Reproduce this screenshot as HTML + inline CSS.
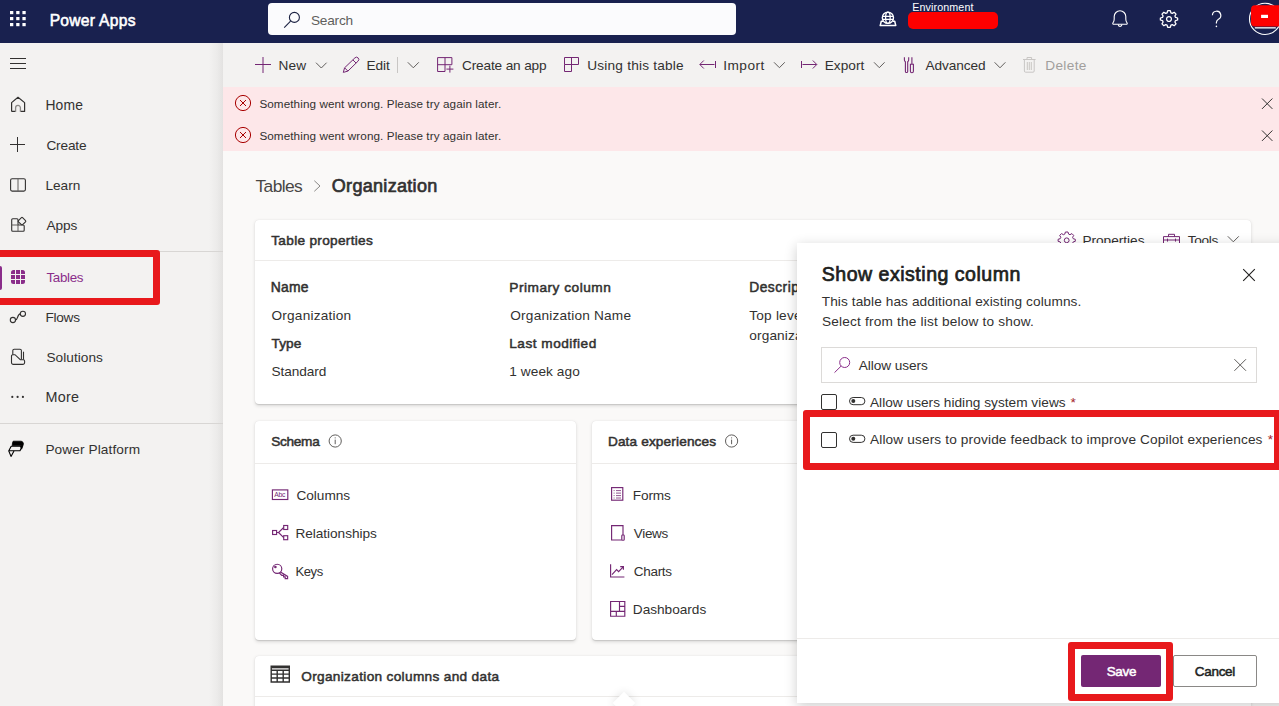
<!DOCTYPE html>
<html lang="en"><head><meta charset="utf-8"><title>Power Apps</title>
<style>
*{box-sizing:border-box;margin:0;padding:0}
html,body{width:1279px;height:706px;overflow:hidden;background:#faf9f8;font-family:"Liberation Sans",sans-serif;color:#323130;font-size:14px}
body{position:relative}
.a{position:absolute}
.t{position:absolute;white-space:nowrap;line-height:1}
svg.l{position:absolute;left:0;top:0;width:1279px;height:706px;overflow:visible}
.card{position:absolute;background:#fff;border-radius:4px;box-shadow:0 1.6px 3.6px rgba(0,0,0,.13),0 .3px .9px rgba(0,0,0,.11)}
.hr{position:absolute;height:1px;background:#edebe9}
.red{position:absolute;border:7px solid #e8191c;border-radius:3px}
</style></head><body>

<!-- MAIN -->
<div class="a" id="main" style="left:223px;top:43px;width:1056px;height:663px;background:#faf9f8;box-shadow:0 0 14px rgba(0,0,0,.13)"></div>
<div class="a" style="left:223px;top:43px;width:1056px;height:44px;background:#f3f2f1"></div>
<div class="a" style="left:223px;top:87px;width:1056px;height:64px;background:#fde7e9"></div>
<div class="card" style="left:255px;top:220px;width:996px;height:184px"><div class="hr" style="left:0;top:40px;width:996px"></div></div>
<div class="card" style="left:255px;top:421px;width:321px;height:218.5px"><div class="hr" style="left:0;top:41.5px;width:321px"></div></div>
<div class="card" style="left:592px;top:421px;width:321px;height:218.5px"><div class="hr" style="left:0;top:41.5px;width:321px"></div></div>
<div class="card" style="left:255px;top:656px;width:996px;height:80px"><div class="hr" style="left:0;top:40px;width:996px"></div></div>
<div class="a" style="left:616px;top:694.8px;width:16px;height:16px;background:#fff;transform:rotate(45deg);box-shadow:0 0 10px rgba(0,0,0,.13)"></div>
<svg class="l" viewBox="0 0 1279 706" fill="none" stroke="#742774" stroke-width="1">
<!-- New plus -->
<path d="M255 64.5H271M263 57V73"/>
<!-- chevrons -->
<g stroke="#605e5c" stroke-width="1">
<path d="M316 62.7L321.3 68L326.6 62.7"/>
<path d="M407.8 62.3L413.3 67.8L418.8 62.3"/>
<path d="M774 62.3L779.4 67.7L784.8 62.3"/>
<path d="M874 62.3L879.3 67.7L884.6 62.3"/>
<path d="M994.6 62.3L1000 67.8L1005.4 62.3"/>
<path d="M1227.8 236.3L1233.3 241.8L1238.8 236.3"/>
<path d="M314.3 180.7L320 186L314.3 191.3" stroke="#8a8886"/>
</g>
<path d="M397.5 57V73" stroke="#c8c6c4"/>
<!-- pencil -->
<path d="M343.3 72.4L344.6 67.8L354.9 57.9A2.2 2.2 0 0 1 358.1 61.1L347.9 71.1Z" stroke-linejoin="round"/>
<path d="M344.6 67.8L347.9 71.1M352.9 59.9L356.1 63.1"/>
<!-- create app -->
<path d="M445 71.5H437.6V57.6H451.9V64.7M445 57.6V71.5M437.6 64.7H451.9M446.4 69.1H453.4M449.9 65.6V72.6"/>
<!-- using table -->
<path d="M564.5 57.5H578.5V64.5H564.5ZM564.5 64.5V71.5H571.5V57.5"/>
<!-- import -->
<path d="M715.5 61V68M714.5 64.5H700M703.8 60.5L699.8 64.5L703.8 68.5"/>
<!-- export -->
<path d="M801.5 61V68M802.5 64.5H816.6M812.8 60.5L816.8 64.5L812.8 68.5"/>
<!-- advanced -->
<path d="M904.4 57.3V60A2 2 0 0 0 905.4 61.7V71.4A1.15 1.15 0 0 0 907.7 71.4V61.7A2 2 0 0 0 908.7 60V57.3M911.9 57.3V64M910.4 64.3H913.4V71.2A1.5 1.5 0 0 1 910.4 71.2Z" stroke-width="1.1"/>
<!-- trash -->
<g stroke="#c8c6c4">
<path d="M1023 59.5H1035.6M1027 59.5V57.5H1031.6V59.5M1024.4 59.5V71A1.2 1.2 0 0 0 1025.6 72.2H1033A1.2 1.2 0 0 0 1034.2 71V59.5M1027.3 62V70M1029.3 62V70M1031.3 62V70"/>
</g>
<!-- error icons -->
<g stroke="#a80000">
<circle cx="243" cy="103" r="7.6"/><path d="M240 100L246 106M246 100L240 106"/>
<circle cx="243" cy="135" r="7.6"/><path d="M240 132L246 138M246 132L240 138"/>
</g>
<g stroke="#323130">
<path d="M1262 98.5L1272.4 108.9M1272.4 98.5L1262 108.9"/>
<path d="M1262 130.5L1272.4 140.9M1272.4 130.5L1262 140.9"/>
</g>
<!-- properties gear (purple) -->
<g transform="translate(1066.7 240.3)">
<circle r="2.4"/>
<path d="M-1.3 -8.3H1.3L1.9 -6.2L3.3 -5.6L5.2 -6.7L7 -4.9L5.9 -3L6.5 -1.6L8.6 -1V1L6.5 1.6L5.9 3L7 4.9L5.2 6.7L3.3 5.6L1.9 6.2L1.3 8.3H-1.3L-1.9 6.2L-3.3 5.6L-5.2 6.7L-7 4.9L-5.9 3L-6.5 1.6L-8.6 1V-1L-6.5 -1.6L-5.9 -3L-7 -4.9L-5.2 -6.7L-3.3 -5.6L-1.9 -6.2Z" stroke-linejoin="round"/>
</g>
<!-- toolbox -->
<path d="M1163.5 236.6H1179.5V247H1163.5ZM1168.5 236.6V234.3H1174.5V236.6M1163.5 240H1179.5M1167.5 238.6V241.6M1175.5 238.6V241.6"/>
<!-- info icons -->
<g stroke="#605e5c">
<circle cx="335.2" cy="441" r="6.1"/><path d="M335.2 439.6V444.2M335.2 437.4V438.4"/>
<circle cx="731.6" cy="441" r="6.1"/><path d="M731.6 439.6V444.2M731.6 437.4V438.4"/>
</g>
<g stroke-width="1.15">
<!-- columns Abc -->
<rect x="272.4" y="489.9" width="15.4" height="9.6"/>
<text x="274.2" y="497.3" font-family="Liberation Sans, sans-serif" font-size="6.8" fill="#742774" stroke="none" letter-spacing="-.2">Abc</text>
<!-- relationships -->
<rect x="272.6" y="530.5" width="4" height="4"/><rect x="283.7" y="525.5" width="4" height="4"/><rect x="283.7" y="535.7" width="4" height="4"/>
<path d="M276.6 532.5H278.6L283.7 527.5M278.6 532.5L283.7 537.7"/>
<!-- key -->
<circle cx="277.2" cy="568.8" r="4.6"/><circle cx="275.4" cy="567" r=".7" fill="#742774"/>
<path d="M280.5 572L287.6 576.4V578.6H285.2V576.9H283.6V575.4H281.8L279.4 573"/>
<!-- forms -->
<rect x="611.6" y="487.6" width="11.2" height="12.6"/>
<path stroke-width=".8" d="M613.6 490.6h1M616 490.6H621M613.6 493.1h1M616 493.1H621M613.6 495.6h1M616 495.6H621M613.6 498h1M616 498H621"/>
<!-- views -->
<path d="M621.8 540H611.6V525.6H623V535"/><rect x="621.8" y="535" width="2.4" height="5.2" rx=".8"/>
<!-- charts -->
<path d="M610.6 564.2V577H624.4M612 574.6L616.6 569.6L618.6 571.6L623.2 566.8M620.2 566.6H623.4V569.8"/>
<!-- dashboards -->
<path d="M610.6 601.5H624.8V616.2H610.6ZM619.5 601.5V611.3M610.6 611.3H624.8M619.5 606.4H624.8M616.3 611.3V616.2"/>
</g>
<!-- table icon (dark) -->
<g stroke="#323130" stroke-width="1.4">
<path d="M271.2 666.2H289.3V682H271.2ZM271.2 670.2H289.3M271.2 674.1H289.3M271.2 678H289.3M277.2 670.2V682M283.2 670.2V682"/>
<path d="M271.2 667.2H289.3" stroke-width="2.2"/>
</g>

</svg>
<span class="t" style="left:278.50px;top:58.67px;font-size:13.65px;letter-spacing:0.156px;color:#323130">New</span>
<span class="t" style="left:366.50px;top:58.67px;font-size:13.65px;letter-spacing:-0.072px;color:#323130">Edit</span>
<span class="t" style="left:462.00px;top:58.67px;font-size:13.65px;letter-spacing:-0.156px;color:#323130">Create an app</span>
<span class="t" style="left:587.25px;top:58.67px;font-size:13.65px;letter-spacing:0.205px;color:#323130">Using this table</span>
<span class="t" style="left:723.25px;top:58.67px;font-size:13.65px;letter-spacing:0.476px;color:#323130">Import</span>
<span class="t" style="left:824.75px;top:58.67px;font-size:13.65px;letter-spacing:0.023px;color:#323130">Export</span>
<span class="t" style="left:925.50px;top:58.67px;font-size:13.65px;letter-spacing:-0.083px;color:#323130">Advanced</span>
<span class="t" style="left:1045.25px;top:58.67px;font-size:13.65px;letter-spacing:0.331px;color:#a19f9d">Delete</span>
<span class="t" style="left:259.40px;top:97.65px;font-size:11.7px;letter-spacing:0.09px;color:#323130">Something went wrong. Please try again later.</span>
<span class="t" style="left:259.40px;top:129.65px;font-size:11.7px;letter-spacing:0.09px;color:#323130">Something went wrong. Please try again later.</span>
<span class="t" style="left:255.50px;top:178.30px;font-size:17.4px;letter-spacing:-0.615px;color:#484644">Tables</span>
<span class="t" style="left:331.75px;top:176.98px;font-size:18.04px;letter-spacing:0.299px;color:#323130;-webkit-text-stroke:0.67px #323130">Organization</span>
<span class="t" style="left:271.25px;top:233.68px;font-size:13.65px;letter-spacing:0.301px;color:#323130;-webkit-text-stroke:0.51px #323130">Table properties</span>
<span class="t" style="left:1082.40px;top:233.68px;font-size:13.65px;letter-spacing:-0.005px;color:#323130">Properties</span>
<span class="t" style="left:1187.70px;top:233.68px;font-size:13.64px;letter-spacing:-0.298px;color:#323130">Tools</span>
<span class="t" style="left:270.75px;top:281.04px;font-size:13.92px;letter-spacing:0.213px;color:#323130;-webkit-text-stroke:0.52px #323130">Name</span>
<span class="t" style="left:271.50px;top:308.68px;font-size:13.65px;letter-spacing:0.204px;color:#323130">Organization</span>
<span class="t" style="left:271.50px;top:336.68px;font-size:13.65px;letter-spacing:0.088px;color:#323130;-webkit-text-stroke:0.51px #323130">Type</span>
<span class="t" style="left:271.50px;top:364.68px;font-size:13.65px;letter-spacing:-0.075px;color:#323130">Standard</span>
<span class="t" style="left:509.30px;top:280.65px;font-size:13.69px;letter-spacing:0.496px;color:#323130;-webkit-text-stroke:0.51px #323130">Primary column</span>
<span class="t" style="left:510.30px;top:308.68px;font-size:13.65px;letter-spacing:0.198px;color:#323130">Organization Name</span>
<span class="t" style="left:509.30px;top:336.68px;font-size:13.65px;letter-spacing:0.488px;color:#323130;-webkit-text-stroke:0.51px #323130">Last modified</span>
<span class="t" style="left:509.30px;top:364.68px;font-size:13.65px;letter-spacing:0.08px;color:#323130">1 week ago</span>
<span class="t" style="left:749.20px;top:280.61px;font-size:13.78px;letter-spacing:0.51px;color:#323130;-webkit-text-stroke:0.51px #323130">Description</span>
<span class="t" style="left:749.30px;top:308.68px;font-size:13.65px;letter-spacing:0.203px;color:#323130">Top level of the Microsoft Dynamics 365 business hierarchy. The</span>
<span class="t" style="left:749.30px;top:328.68px;font-size:13.65px;letter-spacing:0.124px;color:#323130">organization can be a specific business, holding company, or corporation.</span>
<span class="t" style="left:271.20px;top:434.68px;font-size:13.65px;letter-spacing:-0.291px;color:#323130;-webkit-text-stroke:0.51px #323130">Schema</span>
<span class="t" style="left:296.40px;top:488.68px;font-size:13.65px;letter-spacing:-0.017px;color:#323130">Columns</span>
<span class="t" style="left:295.40px;top:526.67px;font-size:13.65px;letter-spacing:-0.039px;color:#323130">Relationships</span>
<span class="t" style="left:295.40px;top:564.98px;font-size:13.05px;letter-spacing:-0.394px;color:#323130">Keys</span>
<span class="t" style="left:607.90px;top:434.68px;font-size:13.65px;letter-spacing:0.138px;color:#323130;-webkit-text-stroke:0.51px #323130">Data experiences</span>
<span class="t" style="left:632.80px;top:488.68px;font-size:13.65px;letter-spacing:-0.156px;color:#323130">Forms</span>
<span class="t" style="left:633.80px;top:526.75px;font-size:13.49px;letter-spacing:-0.321px;color:#323130">Views</span>
<span class="t" style="left:633.80px;top:564.74px;font-size:13.53px;letter-spacing:-0.31px;color:#323130">Charts</span>
<span class="t" style="left:632.80px;top:602.67px;font-size:13.65px;letter-spacing:-0.015px;color:#323130">Dashboards</span>
<span class="t" style="left:301.25px;top:669.67px;font-size:13.65px;letter-spacing:0.322px;color:#323130;-webkit-text-stroke:0.51px #323130">Organization columns and data</span>

<!-- SIDEBAR -->
<div class="a" id="side" style="left:0;top:43px;width:223px;height:663px;background:linear-gradient(90deg,#f3f2f1 0,#f3f2f1 209px,#ecebea 217px,#e3e2e1 223px)"></div>
<div class="a" style="left:0;top:251px;width:223px;height:1px;background:#d8d6d4"></div>
<div class="a" style="left:0;top:423px;width:223px;height:1px;background:#d8d6d4"></div>
<div class="a" style="left:0;top:266px;width:2px;height:24px;background:#8a2d8a;border-radius:0 2px 2px 0"></div>
<svg class="l" viewBox="0 0 1279 706" fill="none" stroke="#323130" stroke-width="1.1">
<!-- hamburger -->
<path d="M10 58.5H26M10 63.5H26M10 68.5H26" stroke-width="1"/>
<!-- home -->
<path d="M11.6 111.4V102.6L18 97.3L24.6 102.6V111.4H20.4M15.6 111.4H11.6" stroke-width="1.2" stroke-linejoin="round"/>
<path d="M15.6 111.8V107.8A2.4 2.4 0 0 1 20.4 107.8V111.8" stroke="#8a8886" stroke-width="1.3"/>
<!-- create plus -->
<path d="M10 144.5H25M17.5 137V152" stroke-width="1"/>
<!-- learn -->
<rect x="10.6" y="178.7" width="14.8" height="12.4" rx="1.5" stroke-width="1.1"/>
<path d="M18 179V191" stroke="#605e5c" stroke-width="1"/>
<!-- apps -->
<path d="M18 225V219.8A1 1 0 0 0 17 218.8H12.7A1 1 0 0 0 11.7 219.8V230.2A1 1 0 0 0 12.7 231.2H23.2A1 1 0 0 0 24.2 230.2V226A1 1 0 0 0 23.2 225Z" stroke-width="1.1"/>
<path d="M11.7 225H18V231.2" stroke="#605e5c" stroke-width="1"/>
<rect x="-2.9" y="-2.9" width="5.8" height="5.8" rx=".8" transform="translate(22 221.2) rotate(45)" stroke-width="1.1"/>
<!-- tables (selected) -->
<rect x="11" y="270" width="14" height="14" rx="2.5" fill="#8a2d8a" stroke="none"/>
<path d="M15.5 270V284M20.5 270V284M11 274.5H25M11 279.5H25" stroke="#f3f2f1" stroke-width="1"/>
<!-- flows -->
<circle cx="12.9" cy="320" r="2.6" stroke-width="1.1"/>
<circle cx="22.9" cy="313.8" r="2.6" stroke-width="1.1"/>
<path d="M15.5 320C18 320 17.2 314 20.3 313.9" stroke-width="1.1"/>
<!-- solutions -->
<path d="M12.8 354.7V350.6A1.4 1.4 0 0 1 14.2 349.2H20A1.4 1.4 0 0 1 21.4 350.6V359.6" stroke-width="1.1"/>
<path d="M11.5 356A1.3 1.3 0 0 1 12.8 354.7H15L20.3 359.7H23.3A1.3 1.3 0 0 1 24.6 361V362.6A1.8 1.8 0 0 1 22.8 364.4H13.3A1.8 1.8 0 0 1 11.5 362.6Z" stroke-width="1.1"/>
<path d="M23.5 351.7V359.7" stroke-width="1.1"/>
<!-- more -->
<g fill="#323130" stroke="none"><circle cx="12.3" cy="396.9" r="1.1"/><circle cx="17.6" cy="396.9" r="1.1"/><circle cx="22.9" cy="396.9" r="1.1"/></g>
<!-- power platform -->
<path d="M13.2 441.2H20.8A2.6 2.6 0 0 1 23.3 444.6L21.6 449.2 20.3 446.3 22.3 445.6H12.2L12.6 442.4Z" fill="#000" stroke="#000" stroke-width=".8" stroke-linejoin="round"/>
<path d="M11.2 446.3H22.2L20 450.7H8.8Z" stroke="#000" stroke-width="1.1" stroke-linejoin="round"/>
<path d="M8.8 451L11 456.4L14 451" stroke="#000" stroke-width="1.1" stroke-linejoin="round"/>

</svg>
<span class="t" style="left:45.40px;top:99.06px;font-size:13.89px;letter-spacing:0.202px;color:#323130">Home</span>
<span class="t" style="left:46.40px;top:138.68px;font-size:13.65px;letter-spacing:-0.151px;color:#323130">Create</span>
<span class="t" style="left:45.40px;top:178.68px;font-size:13.65px;letter-spacing:-0.0px;color:#323130">Learn</span>
<span class="t" style="left:46.40px;top:218.68px;font-size:13.65px;letter-spacing:-0.09px;color:#323130">Apps</span>
<span class="t" style="left:46.50px;top:270.82px;font-size:13.35px;letter-spacing:-0.33px;color:#8a2d8a">Tables</span>
<span class="t" style="left:45.40px;top:310.68px;font-size:13.65px;letter-spacing:-0.25px;color:#323130">Flows</span>
<span class="t" style="left:46.40px;top:350.68px;font-size:13.65px;letter-spacing:0.051px;color:#323130">Solutions</span>
<span class="t" style="left:45.40px;top:389.83px;font-size:14.33px;letter-spacing:0.308px;color:#323130">More</span>
<span class="t" style="left:45.40px;top:442.68px;font-size:13.65px;letter-spacing:0.109px;color:#323130">Power Platform</span>
<div class="red" style="left:-10px;top:250px;width:170px;height:55px"></div>

<!-- HEADER -->
<div class="a" id="hdr" style="left:0;top:0;width:1279px;height:42.7px;background:#19214f"></div>
<div class="a" style="left:268px;top:3px;width:468px;height:32px;background:#fbfbfd;border-radius:4px"></div>
<div class="a" style="left:908px;top:12px;width:90px;height:17px;background:#fe0000;border-radius:5px"></div>
<svg class="l" viewBox="0 0 1279 706" fill="none" stroke="#fff" stroke-width="1.1">
<!-- waffle -->
<g fill="#fff" stroke="none">
<rect x="10" y="11" width="3.3" height="3.2"/><rect x="16.2" y="11" width="3.3" height="3.2"/><rect x="22.4" y="11" width="3.3" height="3.2"/>
<rect x="10" y="17" width="3.3" height="3.2"/><rect x="16.2" y="17" width="3.3" height="3.2"/><rect x="22.4" y="17" width="3.3" height="3.2"/>
<rect x="10" y="23" width="3.3" height="3.2"/><rect x="16.2" y="23" width="3.3" height="3.2"/><rect x="22.4" y="23" width="3.3" height="3.2"/>
</g>
<!-- search -->
<circle cx="294.4" cy="17.4" r="5" stroke="#1b2142" stroke-width="1.1"/>
<path d="M290.6 21.2L284.2 27.7" stroke="#1b2142" stroke-width="1.1"/>
<!-- globe -->
<circle cx="887.9" cy="17.8" r="5.6" stroke-width="1.4"/>
<ellipse cx="887.9" cy="17.8" rx="2.3" ry="5.6" stroke-width="1.3"/>
<path d="M882.4 16.3H893.4M882.4 19.4H893.4" stroke-width="1.3"/>
<path d="M883.2 21.3H881.3L880.2 25.6H895.8L894.7 21.3H892.6" stroke-width="1.5" stroke-linejoin="round"/>
<!-- bell -->
<path d="M1114 24.3H1126C1127.3 24.3 1127.6 23.4 1126.9 22.6C1126 21.6 1125.8 20.6 1125.8 19V16.6A5.8 5.8 0 0 0 1114.2 16.6V19C1114.2 20.6 1114 21.6 1113.1 22.6C1112.4 23.4 1112.7 24.3 1114 24.3Z" stroke-width="1.1"/>
<path d="M1118.2 24.6A1.8 1.8 0 0 0 1121.8 24.6" stroke-width="1.1"/>
<!-- gear -->
<g transform="translate(1169 19)" stroke-width="1.3">
<circle r="2.4"/>
<path d="M-1.3 -8.3H1.3L1.9 -6.2L3.3 -5.6L5.2 -6.7L7 -4.9L5.9 -3L6.5 -1.6L8.6 -1V1L6.5 1.6L5.9 3L7 4.9L5.2 6.7L3.3 5.6L1.9 6.2L1.3 8.3H-1.3L-1.9 6.2L-3.3 5.6L-5.2 6.7L-7 4.9L-5.9 3L-6.5 1.6L-8.6 1V-1L-6.5 -1.6L-5.9 -3L-7 -4.9L-5.2 -6.7L-3.3 -5.6L-1.9 -6.2Z" stroke-linejoin="round"/>
</g>
<!-- help -->
<path d="M1212.4 15.2A4.2 4.2 0 1 1 1218.4 19.2C1217 20 1216.4 20.8 1216.4 22.6V23.4" stroke-width="1.2"/>
<circle cx="1216.4" cy="26.4" r=".8" fill="#fff" stroke="none"/>
<!-- avatar -->
<circle cx="1265.1" cy="18.9" r="15.6" stroke-width="1.1"/>
<rect x="1251" y="5.2" width="40" height="21.4" rx="4" fill="#fe0000" stroke="none"/>
<rect x="1261.1" y="14.8" width="6.9" height="3.2" fill="#fff" stroke="none"/>
<rect x="1254.8" y="27.2" width="21" height="1.3" fill="#fff" stroke="none"/>

</svg>
<span class="t" style="left:49.70px;top:12.70px;font-size:15.6px;letter-spacing:0.28px;color:#fff;-webkit-text-stroke:0.58px #fff">Power Apps</span>
<span class="t" style="left:311.00px;top:13.68px;font-size:13.65px;letter-spacing:-0.227px;color:#605e5c">Search</span>
<span class="t" style="left:912.20px;top:1.64px;font-size:10.72px;letter-spacing:0.111px;color:#fff">Environment</span>

<!-- PANEL -->
<div class="a" id="panel" style="left:797px;top:243px;width:500px;height:460px;background:#fff;box-shadow:0 3px 12px rgba(0,0,0,.2)"></div>
<div class="a" style="left:821px;top:347px;width:436px;height:36px;border:1px solid #dcdad8;background:#fff"></div>
<div class="a" style="left:821px;top:394px;width:16px;height:15.5px;border:1px solid #323130;border-radius:2px;background:#fff"></div>
<div class="a" style="left:821px;top:432px;width:16px;height:15.5px;border:1px solid #323130;border-radius:2px;background:#fff"></div>
<div class="a" style="left:797px;top:638px;width:482px;height:1px;background:#edebe9"></div>
<div class="a" style="left:1081px;top:655px;width:80px;height:32px;background:#742774;border-radius:2px"></div>
<div class="a" style="left:1173px;top:655px;width:84px;height:32px;background:#fff;border:1px solid #8a8886;border-radius:2px"></div>
<svg class="l" viewBox="0 0 1279 706" fill="none" stroke="#323130" stroke-width="1">
<!-- close X -->
<path d="M1243.2 269.2L1254.8 280.8M1254.8 269.2L1243.2 280.8" stroke="#201f1e" stroke-width="1.1"/>
<!-- search purple -->
<circle cx="844.7" cy="362.5" r="5" stroke="#8a2d8a"/>
<path d="M841 366.2L834.5 372.6" stroke="#8a2d8a"/>
<!-- clear X -->
<path d="M1234.4 359.2L1246 370.8M1246 359.2L1234.4 370.8" stroke="#605e5c"/>
<!-- toggles -->
<rect x="849.5" y="397.5" width="15.4" height="7.2" rx="3.6"/><circle cx="853.3" cy="401.1" r="2" fill="#323130" stroke="none"/>
<rect x="849.5" y="435.2" width="15.4" height="7.2" rx="3.6"/><circle cx="853.3" cy="438.8" r="2" fill="#323130" stroke="none"/>

</svg>
<span class="t" style="left:821.75px;top:265.23px;font-size:19.55px;letter-spacing:0.511px;color:#201f1e;-webkit-text-stroke:0.72px #201f1e">Show existing column</span>
<span class="t" style="left:821.75px;top:294.68px;font-size:13.65px;letter-spacing:0.096px;color:#323130">This table has additional existing columns.</span>
<span class="t" style="left:822.00px;top:314.68px;font-size:13.65px;letter-spacing:0.186px;color:#323130">Select from the list below to show.</span>
<span class="t" style="left:858.75px;top:358.68px;font-size:13.65px;letter-spacing:-0.067px;color:#323130">Allow users</span>
<span class="t" style="left:870.00px;top:395.68px;font-size:13.65px;letter-spacing:0.025px;color:#323130">Allow users hiding system views</span>
<span class="t" style="left:1070.50px;top:395.68px;font-size:13.65px;letter-spacing:0px;color:#a4262c">*</span>
<span class="t" style="left:870.00px;top:432.68px;font-size:13.65px;letter-spacing:0.144px;color:#323130">Allow users to provide feedback to improve Copilot experiences</span>
<span class="t" style="left:1267.80px;top:432.68px;font-size:13.65px;letter-spacing:0px;color:#a4262c">*</span>
<span class="t" style="left:1106.70px;top:664.76px;font-size:13.47px;letter-spacing:-0.336px;color:#fff;-webkit-text-stroke:0.5px #fff">Save</span>
<span class="t" style="left:1194.80px;top:664.75px;font-size:13.51px;letter-spacing:-0.305px;color:#201f1e;-webkit-text-stroke:0.5px #201f1e">Cancel</span>
<div class="red" style="left:803px;top:410.3px;width:478.3px;height:59.5px"></div>
<div class="red" style="left:1068px;top:641.5px;width:105px;height:59.5px"></div>
</body></html>
